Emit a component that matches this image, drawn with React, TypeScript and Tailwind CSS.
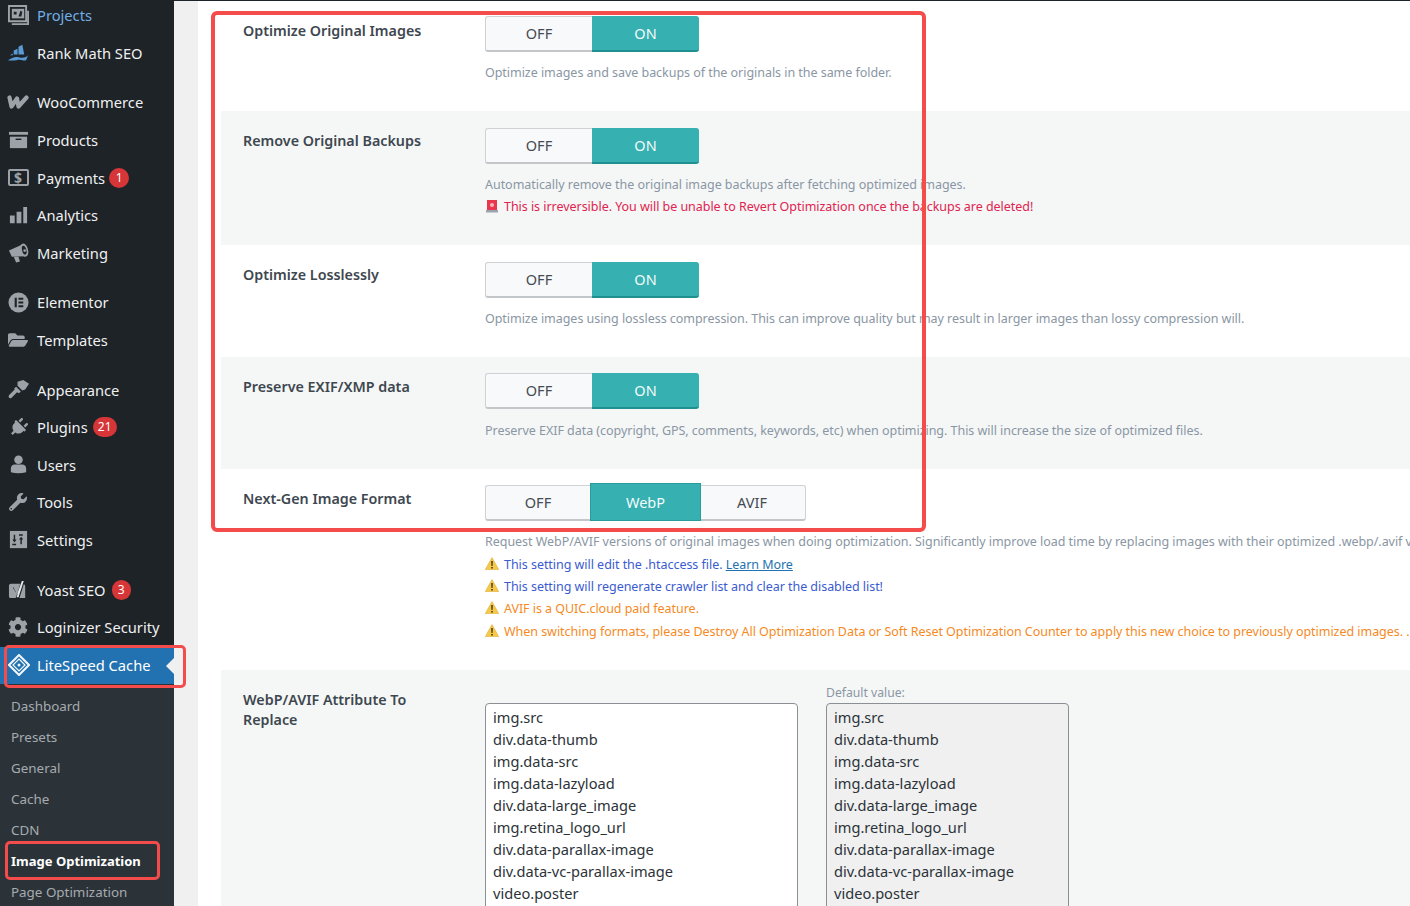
import React from "react";
import { FaFolderOpen, FaPlug, FaWrench, FaCog } from "react-icons/fa";

const G = "#9ca2a7";

const Svg = ({ children }: { children: React.ReactNode }) => (
  <svg width="21" height="21" viewBox="0 0 22 22" fill={G}>{children}</svg>
);

const icons: Record<string, React.ReactNode> = {
  projects: (
    <Svg>
      <path d="M1 1h18v16H1z" fill="none" stroke={G} strokeWidth="2" />
      <path d="M4 20h17V6" fill="none" stroke={G} strokeWidth="2" />
      <path d="M4 4h13v10H4z" />
      <path d="M6 7h3v3H6zM11 12l2-6 2 1-1 5z" fill="#1d2327" />
    </Svg>
  ),
  rank: (
    <Svg>
      <path d="M6 9l4-2v6H6zM11 5l4-2 2 10h-6zM2 14h3v-2l-3 2z" fill="#5b9bd5" />
      <path d="M0 19c4-2 7-4 11-3s7 1 10-2l-2 5c-5 1-6-1-10 0-3 0-6 1-9 0z" fill="#5b9bd5" />
    </Svg>
  ),
  woo: (
    <svg width="22" height="14" viewBox="0 0 22 14" fill="none" stroke={G} strokeWidth="4.200" strokeLinejoin="round" strokeLinecap="round">
      <path d="M2.500 2.500l2 9L10 3.500l1.500 8L19.500 2.500" />
    </svg>
  ),
  products: (
    <Svg>
      <path d="M1 2h20v3H1z" />
      <path d="M2 7h18v12H2z" />
      <path d="M8 9h6v1.500H8z" fill="#1d2327" />
    </Svg>
  ),
  payments: (
    <span className="flex h-[17px] w-[21px] items-center justify-center rounded-[2px] border-2 border-[#9ca2a7] text-[14px] leading-none font-bold text-[#9ca2a7]">$</span>
  ),
  analytics: (
    <Svg>
      <path d="M2 11h5v8H2zM9 7h5v12H9zM16 2h4v17h-4z" />
    </Svg>
  ),
  marketing: (
    <Svg>
      <path d="M1 9L15 2.500 18.500 15 4 15.500z" />
      <path d="M6 15.500h5l1.500 5-4 1z" />
      <ellipse cx="17" cy="8.500" rx="4" ry="7" transform="rotate(-15 17 8.500)" />
      <ellipse cx="17" cy="8.500" rx="2.200" ry="4.800" transform="rotate(-15 17 8.500)" fill="#1d2327" />
      <circle cx="17.500" cy="9" r="1.400" />
    </Svg>
  ),
  elementor: (
    <Svg>
      <circle cx="11" cy="11" r="10.500" />
      <path d="M7 6h2.200v10H7zM11 6h5v2.100h-5zM11 10h5v2.100h-5zM11 14h5v2.100h-5z" fill="#1d2327" />
    </Svg>
  ),
  templates: <FaFolderOpen size={20} color={G} />,
  appearance: (
    <Svg>
      <path d="M10 3l6-2 6 4-4 6-3 1-5-5zM8.500 8l5 5-2 2-2-1-6 6c-2 1-3.500-1-2.500-3l6-6-.5-1z" />
    </Svg>
  ),
  plugins: <FaPlug size={19} color={G} className="rotate-45" />,
  users: (
    <Svg>
      <circle cx="11" cy="6" r="4.500" />
      <path d="M3 19v-4c0-2.500 2-4 4-4h8c2 0 4 1.500 4 4v4c-5 1.500-11 1.500-16 0z" />
    </Svg>
  ),
  tools: <FaWrench size={18} color={G} />,
  settings: (
    <Svg>
      <path d="M2 1h18v18H2z" />
      <path d="M6 5h1.500v5H9l-2.250 3L4.500 10H6zM14.500 15H13v-5h-1.500l2.250-3L16 10h-1.500z" fill="#1d2327" />
      <path d="M4.500 14.500h4V16h-4zM11.500 4.500h4V6h-4z" fill="#1d2327" />
    </Svg>
  ),
  yoast: (
    <Svg>
      <path d="M3 5h12c2 0 3 1 3 3v12H3c-1.500 0-2-1-2-2V7c0-1 1-2 2-2z" />
      <path d="M6 9l3.500 7L14 1h4l-6 19H8l1.500-4L5 9z" fill="#1d2327" />
      <path d="M7 10l2.700 5.500L14.500 2h2L11 19H9l1.200-3.500L6.500 10z" fill="#e5e7e8" />
    </Svg>
  ),
  loginizer: <FaCog size={20} color={G} />,
  litespeed: (
    <svg width="22" height="22" viewBox="0 0 22 22" fill="none">
      <path d="M11 1l10 10-10 10L1 11z" stroke="#f3f6f9" strokeWidth="2" />
      <path d="M11 5l6 6-6 6-6-6z" stroke="#f3f6f9" strokeWidth="1.200" />
      <circle cx="11" cy="11" r="1.500" fill="#f3f6f9" />
    </svg>
  ),
};

type Item = { icon: string; label: string; badge?: string; badgeClass?: string; sep?: boolean; tone?: string };

const menu: Item[] = [
  { icon: "projects", label: "Projects", tone: "text-[#72aee6]" },
  { icon: "rank", label: "Rank Math SEO" },
  { icon: "woo", label: "WooCommerce", sep: true },
  { icon: "products", label: "Products" },
  { icon: "payments", label: "Payments", badge: "1", badgeClass: "ml-1 w-5" },
  { icon: "analytics", label: "Analytics" },
  { icon: "marketing", label: "Marketing" },
  { icon: "elementor", label: "Elementor", sep: true },
  { icon: "templates", label: "Templates" },
  { icon: "appearance", label: "Appearance", sep: true },
  { icon: "plugins", label: "Plugins", badge: "21", badgeClass: "ml-[5px] w-6" },
  { icon: "users", label: "Users" },
  { icon: "tools", label: "Tools" },
  { icon: "settings", label: "Settings" },
  { icon: "yoast", label: "Yoast SEO", badge: "3", badgeClass: "ml-[6px] w-[19px]", sep: true },
  { icon: "loginizer", label: "Loginizer Security" },
];

const sub = ["Dashboard", "Presets", "General", "Cache", "CDN", "Image Optimization", "Page Optimization"];

const Warn = () => (
  <svg width="14" height="13" viewBox="0 0 14 13" className="mr-[5px] inline-block align-[-1px]">
    <path d="M7 .5l6.700 12H.3z" fill="#f7c948" stroke="#d9a520" strokeWidth=".5" />
    <path d="M6.300 4h1.400l-.2 5h-1zM6.300 10h1.400v1.400H6.300z" fill="#222" />
  </svg>
);

const Siren = () => (
  <svg width="14" height="14" viewBox="0 0 14 14" className="mr-[5px] inline-block align-[-2px]">
    <path d="M2 1h10v10H2z" fill="#e8384f" />
    <circle cx="7" cy="6" r="2" fill="#f7b5bd" />
    <path d="M1 11h12v2.500H1z" fill="#9aa5b1" />
  </svg>
);

const Toggle = () => (
  <div className="flex h-9 w-[214px] text-[14.5px]">
    <div className="flex w-[107px] items-center justify-center rounded-l-[3px] border border-b-[2px] border-r-0 border-[#cfd2d4] border-b-[#c4c7c9] bg-[#f8f9fa] text-[#444b52]">OFF</div>
    <div className="flex w-[107px] items-center justify-center rounded-r-[3px] border-t border-b-[2px] border-t-[#36b0b0] border-b-[#1f8f8f] bg-[#36b0b0] text-[#f2fbfb]">ON</div>
  </div>
);

const Tri = () => (
  <div className="flex h-9 w-[321px] -translate-y-px items-center text-[14.5px]">
    <div className="flex h-9 w-[105px] translate-y-px items-center justify-center rounded-l-[3px] border border-b-[2px] border-r-0 border-[#cfd2d4] border-b-[#c4c7c9] bg-[#f8f9fa] text-[#444b52]">OFF</div>
    <div className="flex h-[38px] w-[111px] items-center justify-center border border-[#2a9c9c] bg-[#36b0b0] pt-px text-[#f2fbfb]">WebP</div>
    <div className="flex h-9 w-[105px] translate-y-px items-center justify-center rounded-r-[3px] border border-b-[2px] border-l-0 border-[#cfd2d4] border-b-[#c4c7c9] bg-[#f8f9fa] pr-[2px] text-[#444b52]">AVIF</div>
  </div>
);

const Row = ({ alt, label, className, children }: { alt?: boolean; label: React.ReactNode; className: string; children: React.ReactNode }) => (
  <div className={`flex pl-[22px] ${alt ? "bg-[#f5f7f7]" : "bg-white"} ${className}`}>
    <div className="w-[242px] shrink-0 pt-5 text-[14.3px] leading-[20px] font-semibold text-[#3e474f]">
      <div className="max-w-[190px]">{label}</div>
    </div>
    <div className="min-w-0 flex-1">{children}</div>
  </div>
);

const Desc = ({ className = "text-[#8a96a3]", children }: { className?: string; children: React.ReactNode }) => (
  <div className={`text-[12.5px] leading-[22.4px] tracking-[-0.04px] whitespace-nowrap ${className}`}>{children}</div>
);

const attrs = "img.src\ndiv.data-thumb\nimg.data-src\nimg.data-lazyload\ndiv.data-large_image\nimg.retina_logo_url\ndiv.data-parallax-image\ndiv.data-vc-parallax-image\nvideo.poster\nvideo.poster2\nimg.data-bg";

export default function App() {
  return (
    <div className="relative flex h-[906px] w-[1410px] overflow-hidden bg-[#f0f0f1] font-['Noto_Sans',sans-serif]">
      <aside className="flex h-full w-[174px] shrink-0 flex-col bg-[#1d2327]">
        <nav className="-mt-[3.500px] flex flex-col text-[14.7px] text-[#f0f0f1]">
          {menu.map((m) => (
            <div key={m.label} className={`flex h-[37.6px] items-center ${m.sep ? "mt-3" : ""} ${m.tone ?? ""}`}>
              <span className="flex w-[36px] shrink-0 items-center justify-center">{icons[m.icon]}</span>
              <span className="pl-px whitespace-nowrap">{m.label}</span>
              {m.badge && (
                <span className={`flex h-5 items-center justify-center rounded-full bg-[#d63638] text-[12px] text-white ${m.badgeClass}`}>{m.badge}</span>
              )}
            </div>
          ))}
          <div className="relative mt-[0.500px] flex h-[37px] items-center bg-[#2271b1] text-white">
            <span className="flex w-[37px] shrink-0 items-center justify-center">{icons.litespeed}</span>
            <span>LiteSpeed Cache</span>
            <span className="absolute top-[11px] right-0 h-0 w-0 border-y-[8px] border-r-[8px] border-y-transparent border-r-[#f0f0f1]" />
          </div>
        </nav>
        <div className="flex flex-1 flex-col bg-[#2c3338] pt-[7px] text-[13.4px]">
          {sub.map((s) => (
            <div key={s} className={`flex h-[31px] shrink-0 items-center pl-[11px] ${s === "Image Optimization" ? "pt-px text-[13px] font-bold text-white" : "text-[#a5abb0]"}`}>{s}</div>
          ))}
        </div>
      </aside>

      <div className="flex min-w-0 flex-1 flex-col">
        <div className="h-px w-full shrink-0 bg-[#1d2327]" />
        <main className="ml-6 flex-1 overflow-hidden bg-white pl-[23px]">
          <Row label="Optimize Original Images" className="h-[110px]">
            <div className="pt-[15px]"><Toggle /></div>
            <div className="mt-[10px]"><Desc>Optimize images and save backups of the originals in the same folder.</Desc></div>
          </Row>
          <Row alt label="Remove Original Backups" className="h-[134px]">
            <div className="pt-[17px]"><Toggle /></div>
            <div className="mt-[10px]">
              <Desc>Automatically remove the original image backups after fetching optimized images.</Desc>
              <Desc className="text-[#e0244f]"><Siren />This is irreversible. You will be unable to Revert Optimization once the backups are deleted!</Desc>
            </div>
          </Row>
          <Row label="Optimize Losslessly" className="h-[112px]">
            <div className="pt-[17px]"><Toggle /></div>
            <div className="mt-[10px]"><Desc>Optimize images using lossless compression. This can improve quality but may result in larger images than lossy compression will.</Desc></div>
          </Row>
          <Row alt label="Preserve EXIF/XMP data" className="h-[112px]">
            <div className="pt-4"><Toggle /></div>
            <div className="mt-[11px]"><Desc>Preserve EXIF data (copyright, GPS, comments, keywords, etc) when optimizing. This will increase the size of optimized files.</Desc></div>
          </Row>
          <Row label="Next-Gen Image Format" className="h-[201px]">
            <div className="pt-4"><Tri /></div>
            <div className="mt-[10.200px]">
              <Desc>Request WebP/AVIF versions of original images when doing optimization. Significantly improve load time by replacing images with their optimized .webp/.avif versions.</Desc>
              <Desc className="text-[#3b5bd0]"><Warn />This setting will edit the .htaccess file. <span className="text-[#2271b1] underline">Learn More</span></Desc>
              <Desc className="text-[#3b5bd0]"><Warn />This setting will regenerate crawler list and clear the disabled list!</Desc>
              <Desc className="text-[#f58a1f]"><Warn />AVIF is a QUIC.cloud paid feature.</Desc>
              <Desc className="text-[#f58a1f]"><Warn />When switching formats, please Destroy All Optimization Data or Soft Reset Optimization Counter to apply this new choice to previously optimized images. .</Desc>
            </div>
          </Row>
          <Row alt label="WebP/AVIF Attribute To Replace" className="h-[300px]">
            <div className="flex items-start gap-7 pt-[13px]">
              <div className="pt-[20px]">
                <textarea readOnly defaultValue={attrs} className="h-[260px] w-[313px] resize-none overflow-hidden rounded-[4px] border border-[#8c8f94] bg-white px-[7px] py-[2px] text-[14.600px] leading-[22px] text-[#2c3338]" />
              </div>
              <div>
                <div className="h-[20px] pt-px text-[12.200px] leading-[18px] text-[#8a96a3]">Default value:</div>
                <textarea readOnly defaultValue={attrs} className="h-[260px] w-[243px] resize-none overflow-hidden rounded-[4px] border border-[#8c8f94] bg-[#f0f0f1] px-[7px] py-[2px] text-[14.600px] leading-[22px] text-[#2c3338]" />
              </div>
            </div>
          </Row>
        </main>
      </div>

      <div className="pointer-events-none absolute top-[11px] left-[211px] h-[521px] w-[715px] rounded-[6px] border-4 border-[#f44b4b]" />
      <div className="pointer-events-none absolute top-[645px] left-1 h-[43px] w-[182px] rounded-[5px] border-[3px] border-[#f44b4b]" />
      <div className="pointer-events-none absolute top-[841px] left-[5px] h-[39px] w-[155px] rounded-[5px] border-[3px] border-[#f44b4b]" />
    </div>
  );
}
